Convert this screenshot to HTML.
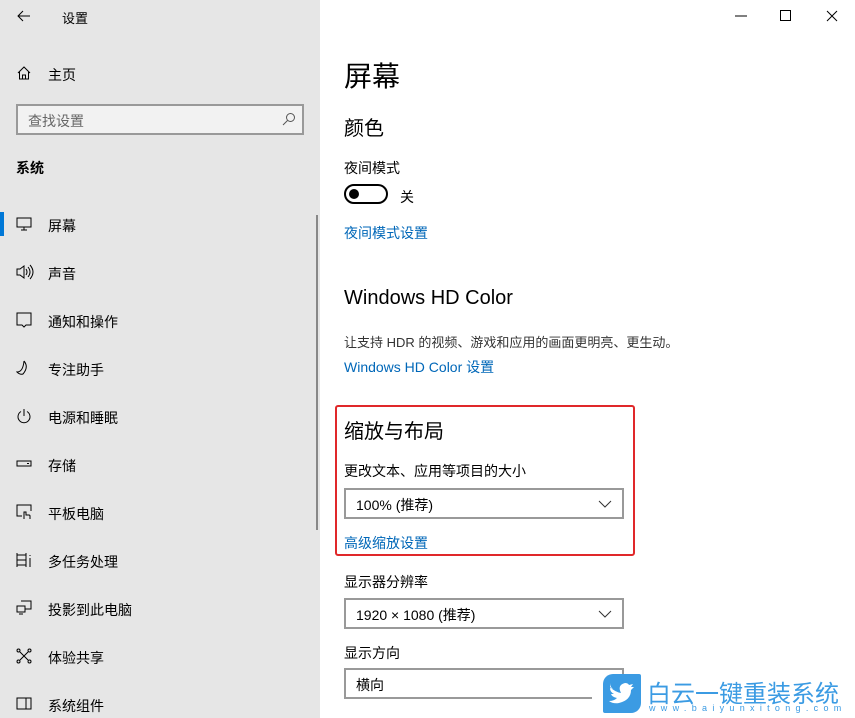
<!DOCTYPE html><html><head><meta charset="utf-8"><style>
*{margin:0;padding:0;box-sizing:border-box}
body{width:855px;height:718px;overflow:hidden;font-family:"Liberation Sans","Noto Sans CJK SC",sans-serif;background:#fff;position:relative;color:#000}
.a{position:absolute;white-space:nowrap}
#side{position:absolute;left:0;top:0;width:320px;height:718px;background:#e6e6e6}
.it{position:absolute;left:48px;font-size:14px}
.ic{position:absolute;left:16px}
.lk{color:#0067b8;font-size:14px}
.dd{position:absolute;left:344px;width:280px;height:31px;border:2px solid #999;font-size:14px;padding:5px 0 0 10px}
.dd svg{position:absolute;right:10px;top:10px}
</style></head><body>
<div id="side">
<svg class="a" style="left:17px;top:10px" width="14" height="12" viewBox="0 0 14 12" fill="none" stroke="#000"><path d="M13 6H1M6 1L1 6l5 5"/></svg>
<div class="a" style="left:62px;top:8px;font-size:13px">设置</div>
<svg class="ic" style="top:65px" width="16" height="16" viewBox="0 0 16 16" fill="none" stroke="#000"><path d="M2 8L8 2l6 6M3.5 7v7h9V7M6.5 14v-4h3v4"/></svg>
<div class="it" style="top:65px">主页</div>
<div class="a" style="left:16px;top:104px;width:288px;height:31px;border:2px solid #999;background:#f2f2f2"></div>
<div class="a" style="left:28px;top:111px;font-size:14px;color:#666">查找设置</div>
<svg class="a" style="left:282px;top:112px" width="14" height="14" viewBox="0 0 14 14" fill="none" stroke="#555"><circle cx="8.5" cy="5.5" r="4"/><path d="M5.5 8.5L1 13"/></svg>
<div class="a" style="left:16px;top:158px;font-size:14px;font-weight:bold">系统</div>
<div class="a" style="left:0;top:212px;width:4px;height:24px;background:#0078d7"></div>
<div class="a" style="left:316px;top:215px;width:2px;height:315px;background:#888"></div>
<svg class="ic" style="top:216px" width="16" height="16" viewBox="0 0 16 16" fill="none" stroke="#000"><rect x="1" y="2" width="14" height="9"/><path d="M8 11v3M5 14h6"/></svg>
<div class="it" style="top:216px">屏幕</div>
<svg class="ic" style="top:264px" width="18" height="16" viewBox="0 0 18 16" fill="none" stroke="#000"><path d="M1 5h3l4-3v12l-4-3H1z M10 5q2 3 0 6 M12 3q4 5 0 10 M14 1q6 7 0 14"/></svg>
<div class="it" style="top:264px">声音</div>
<svg class="ic" style="top:312px" width="16" height="16" viewBox="0 0 16 16" fill="none" stroke="#000"><path d="M1 1h14v12H10l-2 2-2-2H1z"/></svg>
<div class="it" style="top:312px">通知和操作</div>
<svg class="ic" style="top:360px" width="16" height="16" viewBox="0 0 16 16" fill="none" stroke="#000"><path d="M8 1q5 6-1 13Q4 15 1 12q6 0 7-11"/></svg>
<div class="it" style="top:360px">专注助手</div>
<svg class="ic" style="top:408px" width="16" height="16" viewBox="0 0 16 16" fill="none" stroke="#000"><path d="M5 3.5a6 6 0 1 0 6 0M8 1v7"/></svg>
<div class="it" style="top:408px">电源和睡眠</div>
<svg class="ic" style="top:456px" width="16" height="16" viewBox="0 0 16 16" fill="none" stroke="#000"><rect x="1" y="5" width="14" height="5"/><path d="M11 7.5h2"/></svg>
<div class="it" style="top:456px">存储</div>
<svg class="ic" style="top:504px" width="16" height="16" viewBox="0 0 16 16" fill="none" stroke="#000"><path d="M6 12H1V1h14v6M8 15v-7h2v3h3q1 0 1 1v3"/></svg>
<div class="it" style="top:504px">平板电脑</div>
<svg class="ic" style="top:552px" width="16" height="16" viewBox="0 0 16 16" fill="none" stroke="#000"><path d="M1 1v14M10 1v14M1 8h9M1 3h9M1 13h9M14 3v1M14 6v9"/></svg>
<div class="it" style="top:552px">多任务处理</div>
<svg class="ic" style="top:600px" width="16" height="16" viewBox="0 0 16 16" fill="none" stroke="#000"><path d="M5 1h10v8H9M1 6h8v6H1zM3 14h4"/></svg>
<div class="it" style="top:600px">投影到此电脑</div>
<svg class="ic" style="top:648px" width="16" height="16" viewBox="0 0 16 16" fill="none" stroke="#000"><circle cx="2.5" cy="2.5" r="1.5"/><circle cx="13.5" cy="2.5" r="1.5"/><circle cx="2.5" cy="13.5" r="1.5"/><circle cx="13.5" cy="13.5" r="1.5"/><path d="M4 4l8 8M12 4l-8 8"/></svg>
<div class="it" style="top:648px">体验共享</div>
<svg class="ic" style="top:696px" width="16" height="16" viewBox="0 0 16 16" fill="none" stroke="#000"><rect x="1" y="2" width="14" height="11"/><path d="M10 2v11"/></svg>
<div class="it" style="top:696px">系统组件</div>
</div>
<svg class="a" style="left:734px;top:10px" width="14" height="12" viewBox="0 0 14 12" stroke="#000"><path d="M1 6h12"/></svg>
<div class="a" style="left:780px;top:10px;width:11px;height:11px;border:1px solid #000"></div>
<svg class="a" style="left:826px;top:10px" width="12" height="12" viewBox="0 0 12 12" stroke="#000"><path d="M1 1l10 10M11 1L1 11"/></svg>
<div class="a" style="left:344px;top:55px;font-size:28px">屏幕</div>
<div class="a" style="left:344px;top:112px;font-size:20px">颜色</div>
<div class="a" style="left:344px;top:158px;font-size:14px">夜间模式</div>
<div class="a" style="left:344px;top:184px;width:44px;height:20px;border:2px solid #000;border-radius:10px"></div>
<div class="a" style="left:349px;top:189px;width:10px;height:10px;border-radius:50%;background:#000"></div>
<div class="a" style="left:400px;top:187px;font-size:14px">关</div>
<div class="a lk" style="left:344px;top:223px">夜间模式设置</div>
<div class="a" style="left:344px;top:287px;font-size:20px">Windows HD Color</div>
<div class="a" style="left:344px;top:332px;font-size:13px;color:#333">让支持 HDR 的视频、游戏和应用的画面更明亮、更生动。</div>
<div class="a lk" style="left:344px;top:357px">Windows HD Color 设置</div>
<div class="a" style="left:335px;top:405px;width:300px;height:151px;border:2px solid #e0282a;border-radius:3px"></div>
<div class="a" style="left:344px;top:415px;font-size:20px">缩放与布局</div>
<div class="a" style="left:344px;top:461px;font-size:14px">更改文本、应用等项目的大小</div>
<div class="dd" style="top:488px">100% (推荐)<svg width="14" height="8" viewBox="0 0 14 8" fill="none" stroke="#333"><path d="M1 1l6 6 6-6"/></svg></div>
<div class="a lk" style="left:344px;top:533px">高级缩放设置</div>
<div class="a" style="left:344px;top:572px;font-size:14px">显示器分辨率</div>
<div class="dd" style="top:598px">1920 × 1080 (推荐)<svg width="14" height="8" viewBox="0 0 14 8" fill="none" stroke="#333"><path d="M1 1l6 6 6-6"/></svg></div>
<div class="a" style="left:344px;top:643px;font-size:14px">显示方向</div>
<div class="dd" style="top:668px">横向</div>
<div class="a" style="left:592px;top:668px;width:263px;height:50px;background:#fff"></div>
<div class="a" style="left:590px;top:668px;width:34px;height:30px;border:2px solid #999;border-left:none;border-bottom:none"></div>
<div class="a" style="left:603px;top:674px;width:38px;height:39px;background:#3b9be3;border-radius:10px 2px 10px 2px"></div>
<svg class="a" style="left:608px;top:681px" width="28" height="24" viewBox="0 0 28 24"><path d="M2 6q5 5 11 6-4-8 4-10 3 0 4 2l4-1-2 3 3 0-3 3q0 10-12 13-6 1-10-2 5 0 8-3-5-1-6-4l3 0q-4-2-4-6l3 1q-3-2-3-6z" fill="#fff"/></svg>
<div class="a" style="left:647px;top:674px;font-size:24px;color:#3b9be3;letter-spacing:0">白云一键重装系统</div>
<div class="a" style="left:649px;top:703px;font-size:9px;color:#3b9be3;letter-spacing:5.3px">www.baiyunxitong.com</div>
</body></html>
